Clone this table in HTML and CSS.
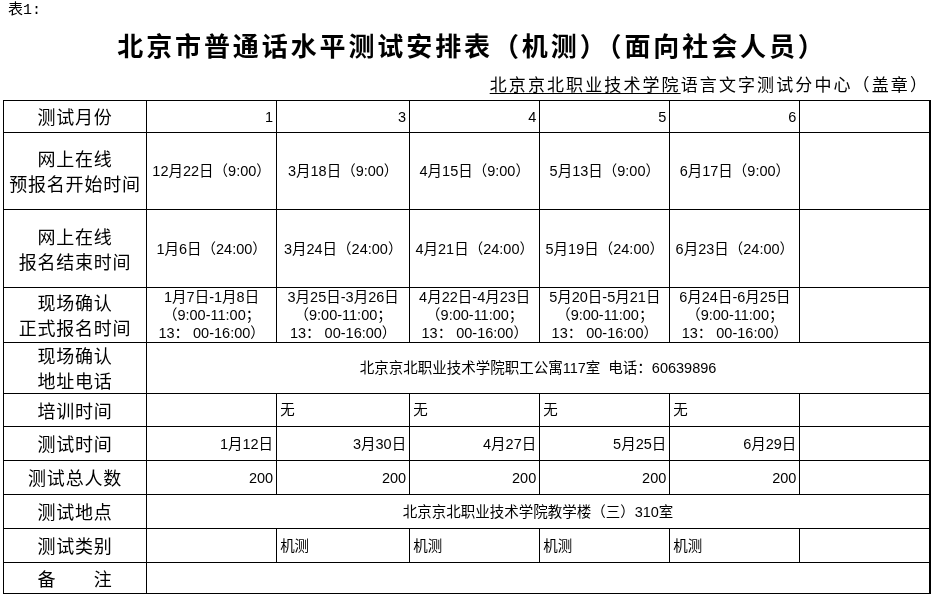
FILE: index.html
```html
<!DOCTYPE html>
<html lang="zh-CN">
<head>
<meta charset="utf-8">
<title>北京市普通话水平测试安排表</title>
<link rel="stylesheet" href="styles.css">
</head>
<body>
<div class="page">
  <div class="note">表1:</div>
  <h1 class="title">北京市普通话水平测试安排表（机测）（面向社会人员）</h1>
  <div class="sub"><span class="u">北京京北职业技术学院</span>语言文字测试分中心（盖章）</div>
  <table class="sched">
    <colgroup>
      <col class="c1"><col class="c2"><col class="c3"><col class="c4"><col class="c5"><col class="c6"><col class="c7">
    </colgroup>
    <tr class="h32">
      <th>测试月份</th>
      <td class="r">1</td><td class="r">3</td><td class="r">4</td><td class="r">5</td><td class="r">6</td><td></td>
    </tr>
    <tr class="h77">
      <th>网上在线<br>预报名开始时间</th>
      <td class="c">12月22日（9:00）</td><td class="c">3月18日（9:00）</td><td class="c">4月15日（9:00）</td><td class="c">5月13日（9:00）</td><td class="c">6月17日（9:00）</td><td></td>
    </tr>
    <tr class="h78">
      <th>网上在线<br>报名结束时间</th>
      <td class="c">1月6日（24:00）</td><td class="c">3月24日（24:00）</td><td class="c">4月21日（24:00）</td><td class="c">5月19日（24:00）</td><td class="c">6月23日（24:00）</td><td></td>
    </tr>
    <tr class="h54">
      <th>现场确认<br>正式报名时间</th>
      <td class="c multi">1月7日-1月8日<br>（9:00-11:00；<br>13： 00-16:00）</td>
      <td class="c multi">3月25日-3月26日<br>（9:00-11:00；<br>13： 00-16:00）</td>
      <td class="c multi">4月22日-4月23日<br>（9:00-11:00；<br>13： 00-16:00）</td>
      <td class="c multi">5月20日-5月21日<br>（9:00-11:00；<br>13： 00-16:00）</td>
      <td class="c multi">6月24日-6月25日<br>（9:00-11:00；<br>13： 00-16:00）</td>
      <td></td>
    </tr>
    <tr class="h51">
      <th>现场确认<br>地址电话</th>
      <td class="c" colspan="6">北京京北职业技术学院职工公寓117室&nbsp; 电话：60639896</td>
    </tr>
    <tr class="h33">
      <th>培训时间</th>
      <td></td><td>无</td><td>无</td><td>无</td><td>无</td><td></td>
    </tr>
    <tr class="h34">
      <th>测试时间</th>
      <td class="r">1月12日</td><td class="r">3月30日</td><td class="r">4月27日</td><td class="r">5月25日</td><td class="r">6月29日</td><td></td>
    </tr>
    <tr class="h34">
      <th>测试总人数</th>
      <td class="r">200</td><td class="r">200</td><td class="r">200</td><td class="r">200</td><td class="r">200</td><td></td>
    </tr>
    <tr class="h34">
      <th>测试地点</th>
      <td class="c" colspan="6">北京京北职业技术学院教学楼（三）310室</td>
    </tr>
    <tr class="h34">
      <th>测试类别</th>
      <td></td><td>机测</td><td>机测</td><td>机测</td><td>机测</td><td></td>
    </tr>
    <tr class="h31">
      <th>备　　注</th>
      <td colspan="6"></td>
    </tr>
  </table>
</div>
</body>
</html>
```

FILE: styles.css
```css
html, body {
  margin: 0;
  padding: 0;
  background: #fff;
}

body {
  color: #000;
  font-family: "Noto Sans CJK SC", "Noto Sans", sans-serif;
  -webkit-font-smoothing: antialiased;
}

.page {
  will-change: transform;
  background: #fff;
}

.note {
  font-family: "Liberation Mono", "Noto Sans CJK SC", monospace;
  font-size: 15px;
  line-height: 22px;
  padding-left: 8px;
}

.title {
  margin: 0;
  font-size: 26px;
  line-height: 46px;
  font-weight: 700;
  letter-spacing: 2.9px;
  text-align: center;
  padding-left: 4px;
}

.sub {
  font-size: 17px;
  line-height: 32px;
  letter-spacing: 2.1px;
  text-align: right;
  padding-right: 11px;
}

.u {
  text-decoration: underline;
  text-decoration-thickness: 1px;
  text-underline-offset: 2px;
}

.sched {
  margin-left: 3px;
  border-collapse: collapse;
  table-layout: fixed;
  width: 928px;
  border-right: 2px solid #000;
}

.c1 { width: 143px; }
.c2 { width: 130px; }
.c3 { width: 133px; }
.c4 { width: 130px; }
.c5 { width: 130px; }
.c6 { width: 130px; }
.c7 { width: 130px; }

.sched th,
.sched td {
  border: 1px solid #000;
  padding: 0 3px;
  vertical-align: middle;
  white-space: nowrap;
  overflow: hidden;
  color: #000;
}

.sched th {
  font-size: 18px;
  line-height: 25px;
  font-weight: 400;
  letter-spacing: 0.8px;
  text-align: center;
  padding: 0;
}

.sched td {
  font-family: "Liberation Sans", "Noto Sans CJK SC", sans-serif;
  font-size: 14.5px;
  line-height: 18px;
  text-align: left;
}

.sched td.r { text-align: right; }
.sched td.c { text-align: center; padding: 0; }
.sched td.multi { line-height: 18px; }

.h32 { height: 32px; }
.h77 { height: 77px; }
.h78 { height: 78px; }
.h54 { height: 54px; }
.h51 { height: 51px; }
.h33 { height: 33px; }
.h34 { height: 34px; }
.h31 { height: 31px; }
```
